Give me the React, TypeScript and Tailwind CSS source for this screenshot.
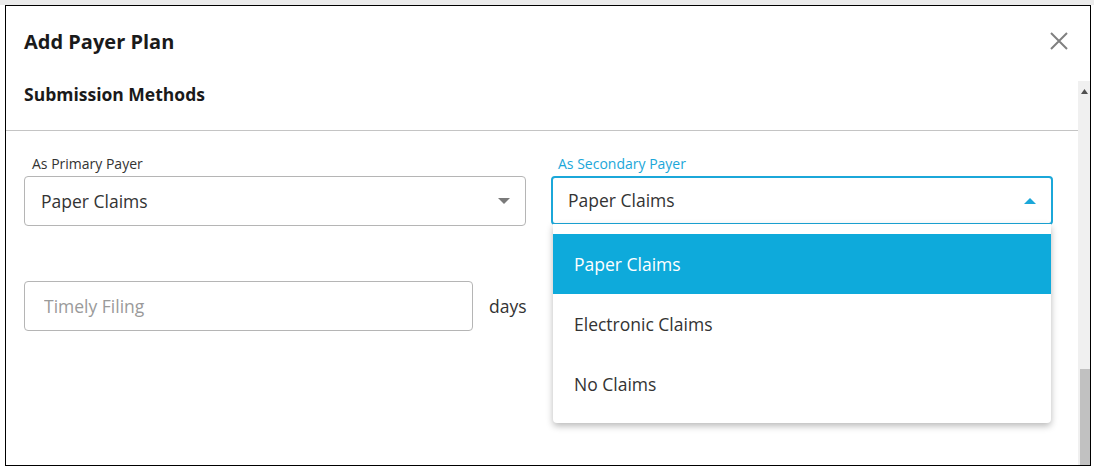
import { useState } from "react";

const options = ["Paper Claims", "Electronic Claims", "No Claims"];

function Caret({ up, className }: { up?: boolean; className: string }) {
  return (
    <svg width="12" height="6" viewBox="0 0 12 6" className={className}>
      {up ? <path d="M0 6 L6 0 L12 6 Z" fill="currentColor" /> : <path d="M0 0 L12 0 L6 6 Z" fill="currentColor" />}
    </svg>
  );
}

export default function App() {
  const [secondary, setSecondary] = useState("Paper Claims");

  return (
    <div className="w-[1094px] h-[468px] bg-white overflow-hidden font-['Open_Sans',sans-serif] text-[#333]">
      <div className="h-[5px] bg-[#ebebeb]" />
      <div className="ml-[5px] w-[1086px] h-[461px] border border-black flex flex-col">
        {/* header */}
        <div className="h-[75px] shrink-0 flex items-start justify-between pl-[18px] pr-[22px] pt-[22px]">
          <h1 className="text-[20px] leading-[28px] font-bold text-[#1a1a1a]">Add Payer Plan</h1>
          <button className="mt-[4px] text-[#808080]">
            <svg width="18" height="18" viewBox="0 0 18 18">
              <path d="M1 1 L17 17 M17 1 L1 17" stroke="currentColor" strokeWidth="2" />
            </svg>
          </button>
        </div>

        {/* body */}
        <div className="flex-1 flex min-h-0">
          <div className="flex-1">
            <div className="pl-[18px] pt-[2px] h-[50px] border-b border-[#c4c4c4]">
              <h2 className="text-[17.5px] leading-[22px] font-bold text-[#1a1a1a]">Submission Methods</h2>
            </div>

            <div className="pl-[18px] pt-[24px] flex gap-[25px]">
              <div className="w-[502px]">
                <label className="block pl-[8px] text-[14px] leading-[18px] text-[#333] mb-[3px]">As Primary Payer</label>
                <div className="h-[50px] border border-[#b5b5b5] rounded-[4px] flex items-center justify-between pl-[16px] pr-[15px]">
                  <span className="text-[17.5px] text-[#333]">Paper Claims</span>
                  <Caret className="text-[#7a7a7a]" />
                </div>
              </div>

              <div className="w-[502px] relative">
                <label className="block pl-[7px] text-[14px] leading-[18px] text-[#1ba7d9] mb-[3px]">As Secondary Payer</label>
                <div className="h-[49px] border-2 border-[#1ba7d9] rounded-[4px] flex items-center justify-between pl-[15px] pr-[15px]">
                  <span className="text-[17.5px] text-[#333]">{secondary}</span>
                  <Caret up className="text-[#1ba7d9]" />
                </div>
                <ul className="absolute left-[2px] top-[69px] w-[498px] bg-white rounded-b-[4px] shadow-[0_3px_7px_rgba(0,0,0,0.28)] pt-[10px] pb-[9px]">
                  {options.map((o) => (
                    <li
                      key={o}
                      onClick={() => setSecondary(o)}
                      className={`h-[60px] flex items-center pl-[21px] text-[17.5px] cursor-pointer ${
                        o === secondary ? "bg-[#0eaadb] text-white" : "text-[#333]"
                      }`}
                    >
                      {o}
                    </li>
                  ))}
                </ul>
              </div>
            </div>

            <div className="pl-[18px] pt-[55px] flex items-center gap-[16px]">
              <input
                placeholder="Timely Filing"
                className="w-[449px] h-[50px] border border-[#b5b5b5] rounded-[4px] pl-[19px] text-[17.5px] outline-none placeholder:text-[#9a9a9a]"
              />
              <span className="text-[17.5px] text-[#333]">days</span>
            </div>
          </div>

          {/* scrollbar */}
          <div className="w-[12px] shrink-0 bg-[#f0f0f0] flex flex-col">
            <div className="h-[14px] flex items-end justify-center pb-[1px]">
              <svg width="7" height="5" viewBox="0 0 7 5">
                <path d="M0 5 L3.5 0 L7 5 Z" fill="#505050" />
              </svg>
            </div>
            <div className="flex-1" />
            <div className="h-[96px] ml-[2px] bg-[#c1c1c1]" />
          </div>
        </div>
      </div>
    </div>
  );
}
